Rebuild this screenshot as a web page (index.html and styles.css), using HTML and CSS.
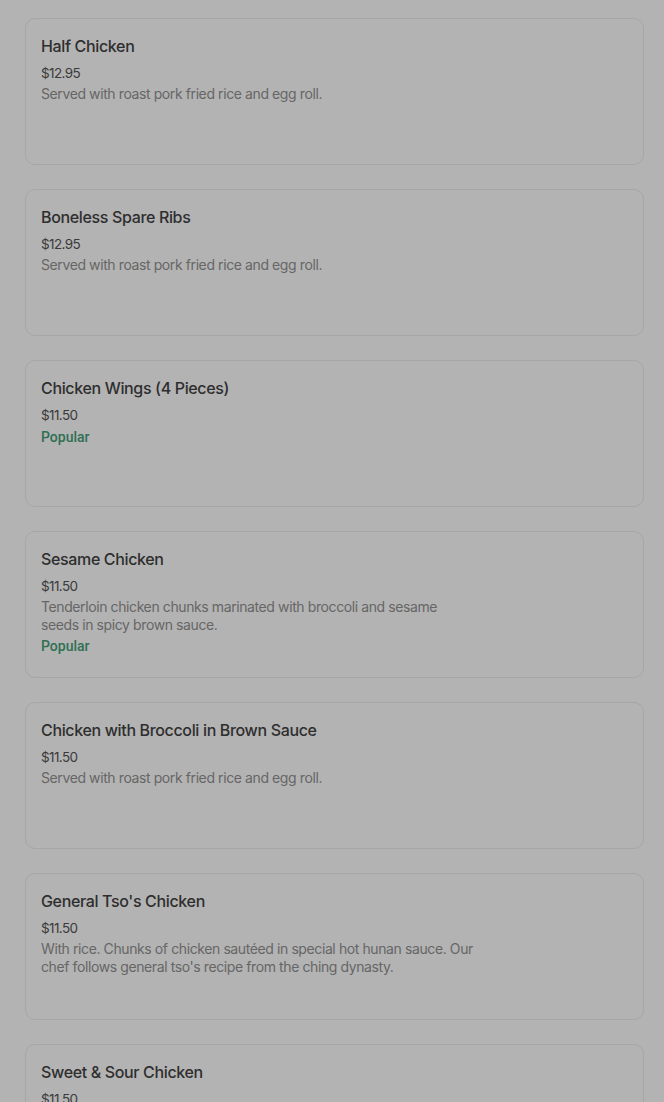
FILE: index.html
```html
<!DOCTYPE html>
<html lang="en">

<head>
    <meta charset="UTF-8">
    <meta name="viewport" content="width=device-width, initial-scale=1.0">
    <title>Menu</title>
    <link rel="stylesheet" href="styles.css">
</head>

<body>
    <section class="menu-list">
        <div class="menu-item">
            <h3>Half Chicken</h3>
            <p class="price">$12.95</p>
            <p class="desc">Served with roast pork fried rice and egg roll.</p>
        </div>

        <div class="menu-item">
            <h3>Boneless Spare Ribs</h3>
            <p class="price">$12.95</p>
            <p class="desc">Served with roast pork fried rice and egg roll.</p>
        </div>

        <div class="menu-item">
            <h3>Chicken Wings (4 Pieces)</h3>
            <p class="price">$11.50</p>
            <p class="tag">Popular</p>
        </div>

        <div class="menu-item">
            <h3>Sesame Chicken</h3>
            <p class="price">$11.50</p>
            <p class="desc">Tenderloin chicken chunks marinated with broccoli and sesame seeds in spicy brown sauce.</p>
            <p class="tag">Popular</p>
        </div>

        <div class="menu-item">
            <h3>Chicken with Broccoli in Brown Sauce</h3>
            <p class="price">$11.50</p>
            <p class="desc">Served with roast pork fried rice and egg roll.</p>
        </div>

        <div class="menu-item">
            <h3>General Tso's Chicken</h3>
            <p class="price">$11.50</p>
            <p class="desc">With rice. Chunks of chicken sautéed in special hot hunan sauce. Our chef follows general tso's recipe from the ching dynasty.</p>
        </div>

        <div class="menu-item">
            <h3>Sweet &amp; Sour Chicken</h3>
            <p class="price">$11.50</p>
            <p class="desc">Served with roast pork fried rice and egg roll.</p>
        </div>
    </section>
</body>

</html>
```

FILE: styles.css
```css
/* General styles */
* {
    margin: 0;
    padding: 0;
    box-sizing: border-box;
}

body {
    font-family: 'Inter', 'Roboto', sans-serif;
    background-color: #b3b3b3;
    color: #2b2b2b;
    overflow: hidden;
}

/* Menu list */
.menu-list {
    display: flex;
    flex-direction: column;
    gap: 24px;
    padding: 18px 20px 0 25px;
}

.menu-item {
    height: 147px;
    padding: 15px 15px;
    border: 1px solid #a6a6a6;
    border-radius: 10px;
}

.menu-item h3 {
    font-size: 16px;
    font-weight: 500;
    line-height: 24px;
    letter-spacing: -0.35px;
    color: #2e2e2e;
}

.menu-item .price {
    margin-top: 5px;
    font-size: 13.5px;
    line-height: 20px;
    letter-spacing: -0.6px;
    color: #3a3a3a;
}

.menu-item .desc {
    max-width: 434px;
    margin-top: 2px;
    font-size: 14px;
    line-height: 18px;
    letter-spacing: -0.4px;
    color: #666;
}

.menu-item .tag {
    margin-top: 2px;
    font-family: 'Roboto', sans-serif;
    font-size: 14px;
    font-weight: 500;
    line-height: 20px;
    color: #2f6f52;
}
```
